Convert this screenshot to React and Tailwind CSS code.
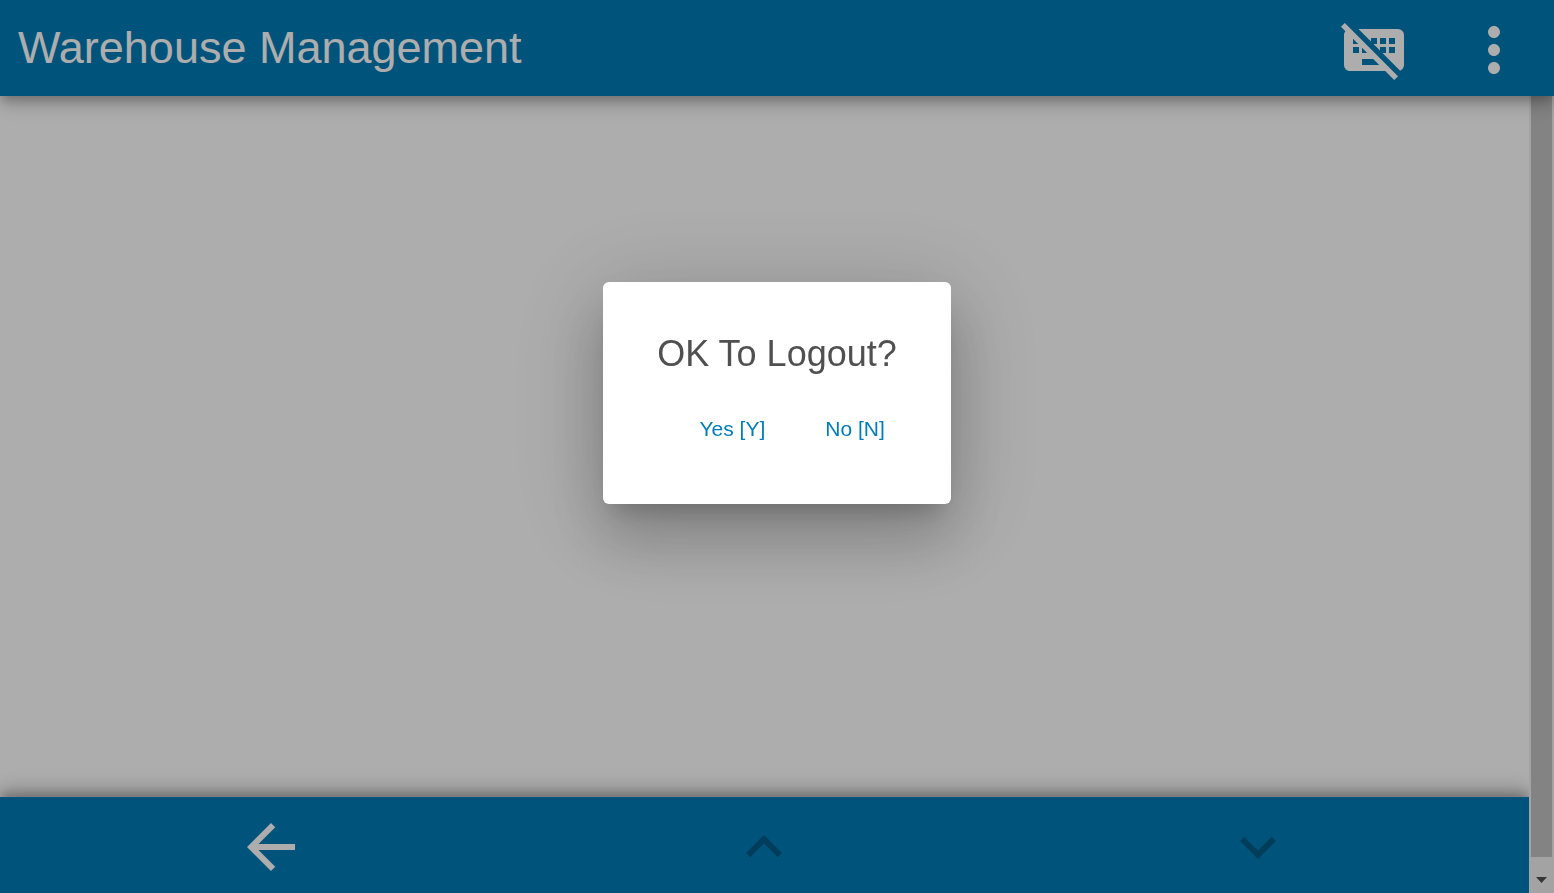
import { MdArrowBack, MdKeyboardArrowDown, MdKeyboardArrowUp, MdMoreVert } from 'react-icons/md';

function KeyboardOffIcon() {
  return (
    <svg viewBox="0 0 24 24" className="size-[72px]" fill="currentColor" aria-hidden="true">
      <path d="M1,4.27L2.28,3L20,20.72L18.73,22L15.73,19H4C2.89,19 2,18.1 2,17V7C2,6.5 2.18,6.07 2.46,5.73L1,4.27M19,10V8H17V10H19M19,13V11H17V13H19M16,10V8H14V10H16M16,13V11H14V12.18L11.82,10H13V8H11V9.18L9.82,8L6.82,5H20A2,2 0 0,1 22,7V17C22,17.86 21.46,18.6 20.7,18.88L14.82,13H16M8,15V17H13.73L11.73,15H8M5,10H6.73L5,8.27V10M7,13V11H5V13H7M8,13H9.73L8,11.27V13Z" />
    </svg>
  );
}

function Header() {
  return (
    <header className="relative z-10 flex h-24 shrink-0 items-center justify-between bg-[#007bb6] pr-6 pl-[18px] text-white shadow-[0_5px_9px_-2px_rgba(0,0,0,0.2),0_9px_15px_0_rgba(0,0,0,0.14),0_2px_27px_0_rgba(0,0,0,0.12)]">
      <h1 className="text-[45px] leading-[60px]">Warehouse Management</h1>
      <div className="flex gap-12 pt-1">
        <button type="button" aria-label="Hide keyboard">
          <KeyboardOffIcon />
        </button>
        <button type="button" aria-label="More options">
          <MdMoreVert className="size-[72px]" />
        </button>
      </div>
    </header>
  );
}

function Footer() {
  return (
    <footer className="grid h-24 shrink-0 grid-cols-3 place-items-center bg-[#007bb6] px-6 pt-1 text-white shadow-[0_-5px_9px_-2px_rgba(0,0,0,0.2),0_-9px_15px_0_rgba(0,0,0,0.14),0_-2px_27px_0_rgba(0,0,0,0.12)]">
      <button type="button" aria-label="Back">
        <MdArrowBack className="size-[72px]" />
      </button>
      <button type="button" aria-label="Previous" disabled className="text-black/26">
        <MdKeyboardArrowUp className="size-[72px]" />
      </button>
      <button type="button" aria-label="Next" disabled className="text-black/26">
        <MdKeyboardArrowDown className="size-[72px]" />
      </button>
    </footer>
  );
}

function Scrollbar() {
  return (
    <div className="flex w-[25px] shrink-0 flex-col bg-[#f1f1f1] px-0.5" aria-hidden="true">
      <div className="flex-1 bg-[#c1c1c1]" />
      <div className="flex h-9 items-center justify-center pt-2.5">
        <svg viewBox="0 0 11 6" className="h-1.5 w-[11px]" fill="#505050">
          <path d="M0 0h11L5.5 6z" />
        </svg>
      </div>
    </div>
  );
}

function LogoutDialog() {
  return (
    <div className="fixed inset-0 z-20 flex items-center justify-center bg-black/32 pb-[107px]">
      <div
        role="dialog"
        aria-modal="true"
        aria-labelledby="logout-title"
        className="rounded-md bg-white px-[42px] pt-12 pb-[49px] shadow-[0_17px_23px_-11px_rgba(0,0,0,0.2),0_36px_57px_5px_rgba(0,0,0,0.14),0_14px_92px_12px_rgba(0,0,0,0.16)]"
      >
        <h2 id="logout-title" className="px-3 text-4xl leading-12 text-[#505050]">
          OK To Logout?
        </h2>
        <div className="mt-[25px] flex justify-end gap-3 text-[21px] leading-[52px] text-[#007db8]">
          <button type="button" className="px-6">
            Yes [Y]
          </button>
          <button type="button" className="px-6">
            No [N]
          </button>
        </div>
      </div>
    </div>
  );
}

export default function App() {
  return (
    <div className="flex h-screen flex-col overflow-hidden bg-white font-['Liberation_Sans',Arial,sans-serif]">
      <Header />
      <div className="flex min-h-0 flex-1">
        <div className="flex min-w-0 flex-1 flex-col overflow-hidden">
          <main className="flex-1" />
          <Footer />
        </div>
        <Scrollbar />
      </div>
      <LogoutDialog />
    </div>
  );
}
